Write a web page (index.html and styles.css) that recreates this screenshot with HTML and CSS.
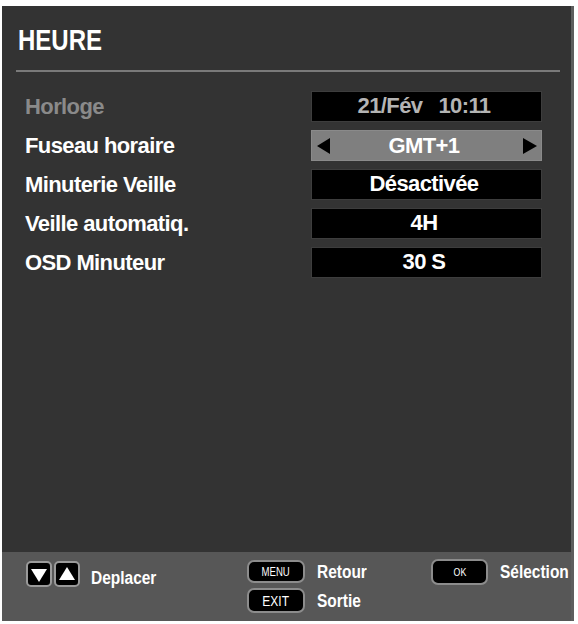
FILE: index.html
```html
<!DOCTYPE html>
<html lang="fr">
<head>
<meta charset="utf-8">
<title>HEURE</title>
<link rel="stylesheet" href="styles.css">
</head>
<body>
<div class="panel">
  <div class="header"><h1 class="title"><span class="tcond">HEURE</span></h1></div>
  <div class="sep"></div>
  <div class="rows">
    <div class="label disabled">Horloge</div>
    <div class="value dim">21/Fév<span class="gap"></span>10:11</div>

    <div class="label">Fuseau horaire</div>
    <div class="value selected"><span class="tri left"></span><span class="vtext">GMT+1</span><span class="tri right"></span></div>

    <div class="label">Minuterie Veille</div>
    <div class="value">Désactivée</div>

    <div class="label">Veille automatiq.</div>
    <div class="value">4H</div>

    <div class="label">OSD Minuteur</div>
    <div class="value">30 S</div>
  </div>
  <div class="spacer"></div>
  <div class="footer">
    <div class="fgroup nav">
      <span class="navbtn"><span class="tri down"></span></span>
      <span class="navbtn"><span class="tri up"></span></span>
      <span class="ftext navtext"><span class="cond">Deplacer</span></span>
    </div>
    <div class="fgroup keys">
      <span class="key menu"><span class="kcond">MENU</span></span><span class="ftext"><span class="cond">Retour</span></span>
      <span class="key exit"><span class="kcond">EXIT</span></span><span class="ftext"><span class="cond">Sortie</span></span>
    </div>
    <div class="fgroup ok">
      <span class="key okkey"><span class="kcond">OK</span></span><span class="ftext"><span class="cond">Sélection</span></span>
    </div>
  </div>
</div>
</body>
</html>
```

FILE: styles.css
```css
html, body {
  margin: 0;
  padding: 0;
  background: #ffffff;
}
body {
  font-family: "Liberation Sans", Arial, sans-serif;
}
.cond {
  display: inline-block;
  transform: scaleX(0.86);
  transform-origin: left center;
}
.tcond {
  display: inline-block;
  transform: scaleX(0.8);
  transform-origin: left center;
}
.kcond {
  display: inline-block;
  transform: scaleX(0.8);
  transform-origin: center center;
}
.panel {
  box-sizing: border-box;
  margin: 6px 0 0 2px;
  width: 572px;
  height: 615px;
  background: #333333;
  border-right: 3px solid #5e5e5e;
  display: flex;
  flex-direction: column;
}
.header {
  padding: 19px 0 0 16px;
  height: 45px;
  box-sizing: border-box;
}
.title {
  margin: 0;
  font-weight: bold;
  font-size: 30px;
  line-height: 30px;
  color: #ffffff;
  white-space: nowrap;
}
.sep {
  margin: 19px 0 0 14px;
  width: 544px;
  height: 2px;
  background: #7a7a7a;
}
.rows {
  margin-top: 19px;
  padding-left: 23px;
  display: grid;
  grid-template-columns: 286px 231px;
  grid-auto-rows: 31px;
  row-gap: 8px;
  align-items: center;
}
.label {
  font-weight: bold;
  font-size: 22px;
  letter-spacing: -0.6px;
  color: #ffffff;
  line-height: 30px;
  white-space: nowrap;
}
.label.disabled {
  color: #8a8a8a;
}
.value {
  height: 31px;
  box-sizing: border-box;
  background: #000000;
  border: 1px solid #3d3d3d;
  color: #ffffff;
  font-weight: bold;
  font-size: 22px;
  letter-spacing: -0.6px;
  line-height: 28px;
  text-align: center;
  white-space: nowrap;
  padding-right: 5px;
}
.value.dim {
  color: #b4b4b4;
}
.gap {
  display: inline-block;
  width: 16px;
}
.value.selected {
  background: #7f7f7f;
  border-color: #8a8a8a;
  display: flex;
  align-items: center;
  padding: 0 4px 0 5px;
}
.vtext {
  flex: 1;
  text-align: center;
  padding-right: 5px;
}
.tri {
  display: inline-block;
  width: 0;
  height: 0;
}
.tri.left {
  border-top: 8px solid transparent;
  border-bottom: 8px solid transparent;
  border-right: 13px solid #000000;
}
.tri.right {
  border-top: 8px solid transparent;
  border-bottom: 8px solid transparent;
  border-left: 14px solid #000000;
}
.spacer {
  flex: 1;
}
.footer {
  height: 69px;
  box-sizing: border-box;
  background: #575757;
  display: grid;
  grid-template-columns: 221px 184px auto;
  padding: 8px 0 0 24px;
  align-items: start;
}
.ftext {
  font-weight: bold;
  font-size: 18px;
  line-height: 20px;
  color: #ffffff;
  white-space: nowrap;
}
.fgroup.nav {
  display: flex;
  align-items: center;
  gap: 2px;
}
.navbtn {
  box-sizing: border-box;
  width: 26px;
  height: 26px;
  border: 2px solid #9a9a9a;
  border-radius: 5px;
  background: #000000;
  display: flex;
  align-items: center;
  justify-content: center;
}
.tri.down {
  border-left: 8px solid transparent;
  border-right: 8px solid transparent;
  border-top: 13px solid #ffffff;
  margin-top: 2px;
}
.tri.up {
  border-left: 8px solid transparent;
  border-right: 8px solid transparent;
  border-bottom: 13px solid #ffffff;
  margin-top: -2px;
}
.navtext {
  margin-left: 9px;
  padding-top: 8px;
}
.fgroup.keys {
  display: grid;
  grid-template-columns: 58px auto;
  grid-template-rows: 23px 25px;
  column-gap: 12px;
  row-gap: 5px;
  align-items: center;
}
.key {
  box-sizing: border-box;
  height: 100%;
  background: #000000;
  border: 2px solid #8c8c8c;
  border-radius: 7px;
  color: #ffffff;
  display: flex;
  align-items: center;
  justify-content: center;
}
.key.menu {
  font-size: 12px;
}
.key.exit {
  font-size: 15px;
}
.fgroup.ok {
  display: flex;
  align-items: center;
  gap: 12px;
  margin-top: -1px;
}
.key.okkey {
  width: 57px;
  height: 26px;
  font-size: 11px;
}
```
